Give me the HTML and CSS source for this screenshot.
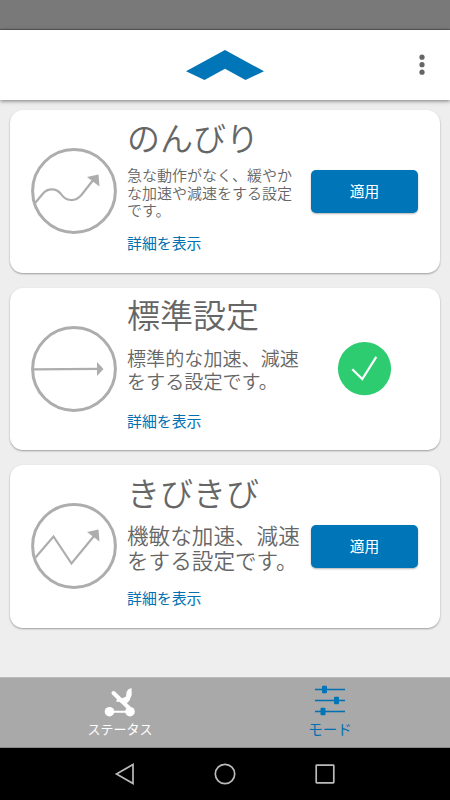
FILE: index.html
```
<!DOCTYPE html>
<html lang="ja">
	<head>
		<meta charset="utf-8">
		<title>モード</title>
		<link rel="stylesheet" href="styles.css">
	</head>
	<body>
		<div class="statusbar"></div>
		<header class="header">
			<svg class="logo" width="78" height="30" viewBox="0 0 78 30">
				<path fill="#0075b8" d="M0 21.3 L39 0 L78 21.3 L59.5 30 L39 18.7 L18.5 30 Z"/>
			</svg>
			<svg class="menu" width="6" height="22" viewBox="0 0 6 22">
				<g fill="#666">
					<circle cx="3" cy="3.2" r="2.6"/>
					<circle cx="3" cy="10.7" r="2.6"/>
					<circle cx="3" cy="18.2" r="2.6"/>
				</g>
			</svg>
		</header>

		<main class="modes">
			<section class="card">
				<svg class="mode-icon" width="86" height="86" viewBox="0 0 86 86">
					<circle cx="43" cy="43" r="41.4"/>
					<path d="M4.5 54.5 L12 45.5 C17 40 25 40 30 46 C35 53.5 44 54 50 47.5 L63 31"/>
					<polygon points="56,29 67.5,26.5 68.5,38.5"/>
				</svg>
				<div class="info">
					<h2>のんびり</h2>
					<p class="desc small">急な動作がなく、緩やか<br>な加速や減速をする設定<br>です。</p>
					<a class="detail">詳細を表示</a>
				</div>
				<div class="action"><button class="apply">適用</button></div>
			</section>

			<section class="card">
				<svg class="mode-icon" width="86" height="86" viewBox="0 0 86 86">
					<circle cx="43" cy="43" r="41.4"/>
					<path d="M2 43.3 L67 42.9"/>
					<polygon points="66,36 72.5,43 66,50"/>
				</svg>
				<div class="info">
					<h2>標準設定</h2>
					<p class="desc medium">標準的な加速、減速<br>をする設定です。</p>
					<a class="detail">詳細を表示</a>
				</div>
				<div class="action">
					<svg width="54" height="54" viewBox="0 0 54 54">
						<circle cx="26.5" cy="26.6" r="26.6" fill="#2ecc71"/>
						<path d="M14.3 27.2 L24.3 37 L38.3 14.8" fill="none" stroke="#fff" stroke-width="2.2"/>
					</svg>
				</div>
			</section>

			<section class="card">
				<svg class="mode-icon" width="86" height="86" viewBox="0 0 86 86">
					<circle cx="43" cy="43" r="41.4"/>
					<path d="M4.5 54.5 L22.5 33.5 L40.5 60.5 L63 33"/>
					<polygon points="56,29 67.5,26.5 68.5,38.5"/>
				</svg>
				<div class="info">
					<h2>きびきび</h2>
					<p class="desc large">機敏な加速、減速<br>をする設定です。</p>
					<a class="detail">詳細を表示</a>
				</div>
				<div class="action"><button class="apply">適用</button></div>
			</section>
		</main>

		<nav class="tabs">
			<a class="tab">
				<svg width="32" height="32" viewBox="0 0 32 32">
					<g fill="#fff">
						<circle cx="5.5" cy="25.7" r="4.8"/>
						<circle cx="26" cy="25.7" r="4.8"/>
						<path d="M19 12 L22 10.5 L22.7 5.5 Q24 2.500 27.500 2 L27.700 9 L25.300 14.700 L23 17 L12 15.5 L13.500 12 Z"/>
					</g>
					<g fill="none" stroke="#fff" stroke-linecap="round">
						<path d="M6 25.7 H26" stroke-width="2"/>
						<path d="M9.500 7 L25.500 22.500" stroke-width="4"/>
					</g>
				</svg>
				<span>ステータス</span>
			</a>
			<a class="tab active">
				<svg width="32" height="32" viewBox="0 0 32 32">
					<path d="M1 3.5 H31 M1 14.5 H31 M1 25.5 H31" stroke="#0070b0" stroke-width="1.3"/>
					<g fill="#0075b8">
						<rect x="8" y="-0.2" width="5" height="7.5" rx="1"/>
						<rect x="20" y="10.8" width="5" height="7.5" rx="1"/>
						<rect x="6.5" y="21.8" width="5" height="7.5" rx="1"/>
					</g>
				</svg>
				<span>モード</span>
			</a>
		</nav>

		<footer class="navbar">
			<svg width="20" height="22" viewBox="0 0 20 22"><path d="M18 1.5 V20.5 L1.5 11 Z"/></svg>
			<svg width="22" height="22" viewBox="0 0 22 22"><circle cx="11" cy="11" r="9.7"/></svg>
			<svg width="20" height="20" viewBox="0 0 20 20"><rect x="1.2" y="1.2" width="17.6" height="17.6" rx="0.5"/></svg>
		</footer>
	</body>
</html>
```
FILE: styles.css
```
* {
	box-sizing: border-box;
}

body {
	margin: 0;
	height: 800px;
	display: flex;
	flex-direction: column;
	overflow: hidden;
	background-color: #eee;
	color: #666;
	font-family: "Noto Sans CJK JP", sans-serif;
}

svg {
	display: block;
	overflow: visible;
}

/* Top of the screen */
.statusbar {
	height: 30px;
	background-color: #797979;
	border-bottom: 1px solid #5c5a5c;
}

.header {
	display: grid;
	grid-template-columns: 1fr auto 1fr;
	align-items: center;
	height: 70px;
	padding: 0 25px;
	background-color: #fff;
	box-shadow: 0 1px 4px rgba(0,0,0,0.5);
}

.logo {
	grid-column: 2;
}

.menu {
	justify-self: end;
}

/* Mode cards */
.modes {
	flex: 1;
	display: flex;
	flex-direction: column;
	gap: 15px;
	padding: 10px 10px 0;
}

.card {
	display: grid;
	grid-template-columns: 96px 184px 107px;
	height: 162.5px;
	padding-left: 21px;
	background-color: #fff;
	border-radius: 13px;
	box-shadow: 0 1px 2px rgba(0,0,0,0.35);
}

.mode-icon {
	margin-top: 38px;
	fill: none;
	stroke: #adadad;
}

.mode-icon circle {
	stroke-width: 3;
}

.mode-icon path {
	stroke-width: 2.2;
}

.mode-icon polygon {
	fill: #adadad;
	stroke: none;
}

.info {
	padding-top: 6.5px;
	white-space: nowrap;
}

.info h2 {
	margin: 0;
	font-size: 33px;
	font-weight: 350;
	line-height: 40px;
}

.desc {
	display: flow-root;
	height: 60px;
	margin: 5.5px 0 11px;
	font-weight: 350;
}

.small {
	padding-top: 4px;
	font-size: 15px;
	line-height: 17.5px;
}

.medium {
	padding-top: 7px;
	font-size: 19.1px;
	line-height: 23px;
}

.large {
	padding-top: 4.5px;
	font-size: 21.6px;
	line-height: 25.5px;
}

.detail {
	display: block;
	color: #0070b0;
	font-size: 14.9px;
	line-height: 20px;
}

.action {
	display: grid;
	place-items: center;
}

.apply {
	width: 107px;
	height: 43px;
	padding: 0 0 1px;
	border: none;
	border-radius: 5px;
	background-color: #0075b8;
	color: #fff;
	font: 14.7px "Noto Sans CJK JP", sans-serif;
	box-shadow: 0 1px 2px rgba(0,0,0,0.3);
}

/* Tabs */
.tabs {
	display: flex;
	height: 71px;
	padding: 0 15px;
	background-color: #a9a9a9;
	border-top: 1px solid #bbb;
	border-bottom: 1px solid #888;
}

.tab {
	flex: 1;
	display: flex;
	flex-direction: column;
	align-items: center;
	padding-top: 8px;
	color: #fff;
	font-size: 13px;
	line-height: 20px;
}

.tab span {
	padding-top: 1px;
}

.active {
	color: #0070b0;
	font-size: 14.5px;
}

.navbar {
	display: flex;
	align-items: center;
	justify-content: space-between;
	height: 52px;
	padding: 0 115px;
	background-color: #000;
}

.navbar svg {
	fill: none;
	stroke: #bbb;
	stroke-width: 1.7;
}
```
